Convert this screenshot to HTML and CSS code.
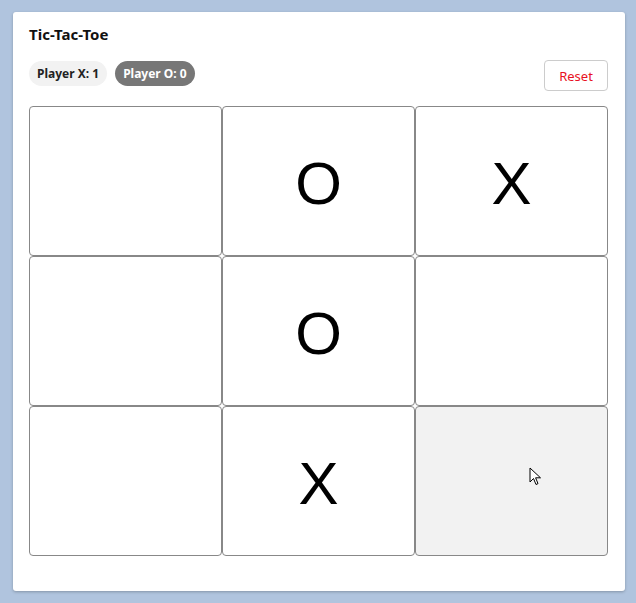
FILE: index.html
```html
<!DOCTYPE html>
<html>
<head>
<meta charset="utf-8">
<link rel="stylesheet" href="styles.css">
</head>
<body>
<div class="card">
  <h1 class="title">Tic-Tac-Toe</h1>
  <div class="toolbar">
    <div class="scores">
      <span class="chip">Player X: 1</span>
      <span class="chip active">Player O: 0</span>
    </div>
    <button class="reset">Reset</button>
  </div>
  <div class="board">
    <div class="cell"></div>
    <div class="cell">O</div>
    <div class="cell">X</div>
    <div class="cell"></div>
    <div class="cell">O</div>
    <div class="cell"></div>
    <div class="cell"></div>
    <div class="cell">X</div>
    <div class="cell hover">
      <svg class="cursor" width="13" height="20" viewBox="0 0 13 20"><path d="M1 1 L1 15 L4.5 11.5 L7 17.5 L9 16.6 L6.6 10.8 L11.5 10.8 Z" fill="#fff" stroke="#000" stroke-width="1" stroke-linejoin="miter"/></svg>
    </div>
  </div>
</div>
</body>
</html>
```
FILE: styles.css
```css
html, body { height: 100%; }
body {
  margin: 0;
  padding: 12px 11px 12px 13px;
  box-sizing: border-box;
  background: #b0c4de;
  font-family: "Noto Sans", "Open Sans", sans-serif;
}
.card {
  background: #fff;
  height: 579px;
  box-sizing: border-box;
  padding: 13px 16px 0 16px;
  border-radius: 3px;
  box-shadow: 0 1px 3px rgba(0,0,0,0.25);
}
.title {
  margin: 0;
  font-size: 15px;
  font-weight: 700;
  line-height: 18px;
  color: #111;
}
.toolbar {
  display: flex;
  justify-content: space-between;
  align-items: flex-start;
  margin-top: 17px;
  margin-bottom: 15px;
}
.scores { display: flex; gap: 8px; margin-top: 1px; }
.chip {
  display: inline-flex;
  align-items: center;
  height: 25px;
  padding: 0 8px;
  border-radius: 13px;
  background: #f2f2f2;
  color: #222;
  font-size: 12px;
  font-weight: 700;
}
.chip.active { background: #777; color: #fff; }
.reset {
  width: 64px;
  height: 31px;
  border: 1px solid #ccc;
  border-radius: 4px;
  background: #fff;
  color: #e81123;
  font-family: inherit;
  font-size: 13px;
  padding: 0;
  margin-right: 1px;
}
.board {
  display: grid;
  grid-template-columns: repeat(3, 193px);
  grid-template-rows: repeat(3, 150px);
}
.cell {
  position: relative;
  border: 1px solid #888;
  border-radius: 4px;
  display: flex;
  align-items: center;
  justify-content: center;
  font-family: "Liberation Sans", Arial, sans-serif;
  font-size: 60px;
  color: #000;
  padding-top: 4px;
  box-sizing: border-box;
}
.cell.hover { background: #f2f2f2; }
.cursor { position: absolute; left: 113px; top: 60px; }
```
